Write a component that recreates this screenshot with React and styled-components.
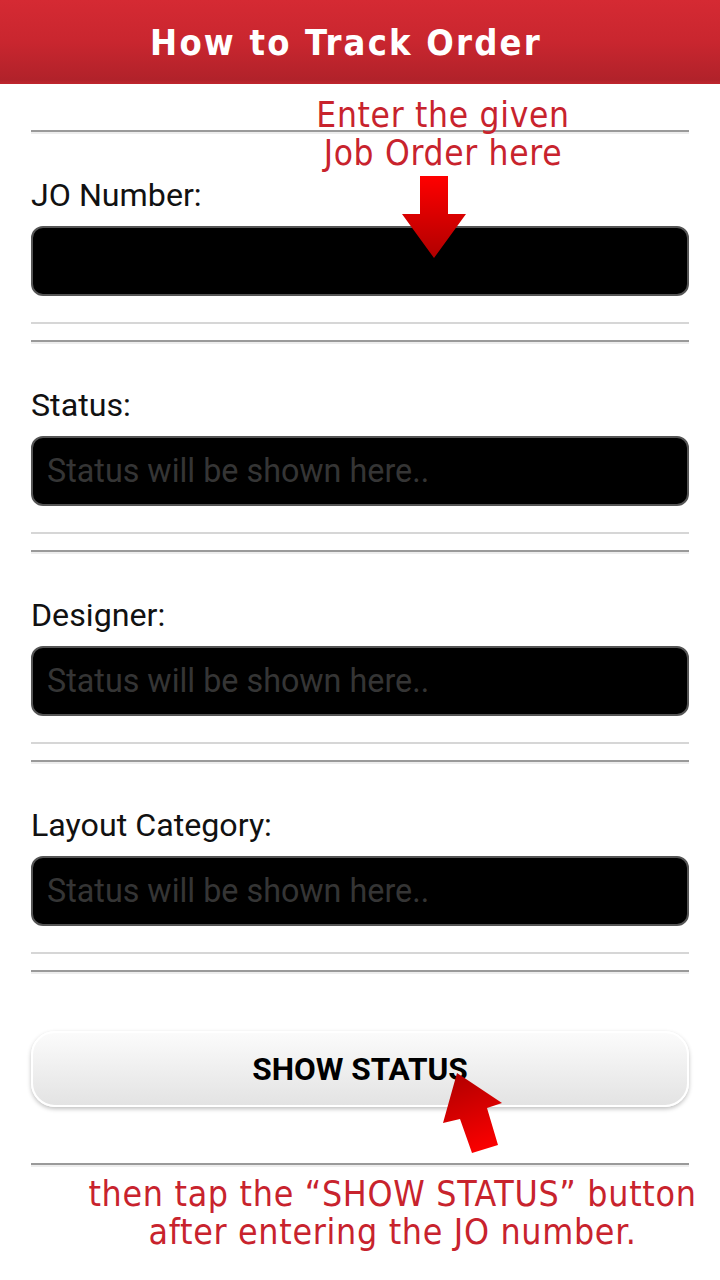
import React from "react";
import styled, { createGlobalStyle } from "styled-components";

const Global = createGlobalStyle`
  html, body { margin: 0; padding: 0; background: #fff; }
  body { font-family: Roboto, "Liberation Sans", sans-serif; }
  * { box-sizing: border-box; }
`;

const Page = styled.div`
  width: 720px;
  min-height: 1280px;
  background: #fff;
  position: relative;
  overflow: hidden;
`;

const Header = styled.header`
  height: 84px;
  padding-right: 28px;
  background: linear-gradient(#d52a33 0%, #c9262f 50%, #b1222a 95%, #c0262e 100%);
  display: flex;
  align-items: center;
  justify-content: center;
`;

const Title = styled.h1`
  margin: 0;
  font-family: "DejaVu Sans Condensed", "DejaVu Sans", sans-serif;
  font-stretch: condensed;
  font-weight: bold;
  font-size: 36px;
  letter-spacing: 2.2px;
  color: #fff;
`;

const Content = styled.main`
  padding: 0 31px;
  display: flex;
  flex-direction: column;
  position: relative;
`;

const HeavyRule = styled.div`
  height: 4px;
  border-top: 2px solid #9a9a9a;
  border-bottom: 2px solid #ededed;
  margin-top: ${(p) => p.$top}px;
`;

const LightRule = styled.div`
  height: 2px;
  background: #d6d6d6;
  margin-top: 26px;
`;

const Label = styled.label`
  margin-top: 44px;
  font-size: 32.2px;
  line-height: 34px;
  color: #111;
  height: 34px;
`;

const Field = styled.div`
  margin-top: 14px;
  height: 70px;
  background: #000;
  border: 2px solid #555;
  border-radius: 12px;
  display: flex;
  align-items: center;
  padding: 0 14px;
  font-size: 32.3px;
  color: #353535;
  white-space: nowrap;
`;

const ButtonWrap = styled.div`
  margin-top: 57px;
`;

const ShowButton = styled.button`
  width: 100%;
  height: 76px;
  border: 2px solid #fff;
  border-radius: 24px;
  background: linear-gradient(#fbfbfb, #e3e3e3);
  box-shadow: 0 2px 4px rgba(0, 0, 0, 0.25);
  font-family: Roboto, "Liberation Sans", sans-serif;
  font-weight: bold;
  font-size: 31.6px;
  padding-top: 2px;
  color: #000;
  display: flex;
  align-items: center;
  justify-content: center;
`;

const Caption = styled.p`
  margin: 8px 0 0 40px;
  width: 643px;
  text-align: center;
  white-space: nowrap;
  font-family: "DejaVu Sans Condensed", "DejaVu Sans", sans-serif;
  font-stretch: condensed;
  font-size: 35.4px;
  line-height: 38px;
  letter-spacing: 0.7px;
  color: #c8232d;
`;

const Note = styled.div`
  position: absolute;
  left: 263px;
  top: 96px;
  width: 360px;
  text-align: center;
  font-family: "DejaVu Sans Condensed", "DejaVu Sans", sans-serif;
  font-stretch: condensed;
  font-size: 35px;
  line-height: 38px;
  letter-spacing: 0.7px;
  color: #c8232d;
  white-space: nowrap;
`;

const ArrowLayer = styled.svg`
  position: absolute;
  left: 0;
  top: 0;
  pointer-events: none;
`;

const sections = [
  { label: "JO Number:", placeholder: "" },
  { label: "Status:", placeholder: "Status will be shown here.." },
  { label: "Designer:", placeholder: "Status will be shown here.." },
  { label: "Layout Category:", placeholder: "Status will be shown here.." },
];

export default function App() {
  return (
    <Page>
      <Global />
      <Header>
        <Title>How to Track Order</Title>
      </Header>
      <Content>
        {sections.map((s, i) => (
          <React.Fragment key={s.label}>
            <HeavyRule $top={i === 0 ? 46 : 16} />
            <Label>{s.label}</Label>
            <Field>{s.placeholder}</Field>
            <LightRule />
          </React.Fragment>
        ))}
        <HeavyRule $top={16} />
        <ButtonWrap>
          <ShowButton>SHOW STATUS</ShowButton>
        </ButtonWrap>
        <HeavyRule $top={56} />
        <Caption>
          then tap the “SHOW STATUS” button
          <br />
          after entering the JO number.
        </Caption>
      </Content>
      <Note>
        Enter the given
        <br />
        Job Order here
      </Note>
      <ArrowLayer width="720" height="1280" viewBox="0 0 720 1280">
        <defs>
          <linearGradient id="downGrad" x1="0" y1="0" x2="0" y2="1">
            <stop offset="0" stopColor="#ff0000" />
            <stop offset="1" stopColor="#b00000" />
          </linearGradient>
          <linearGradient id="upGrad" gradientUnits="userSpaceOnUse" x1="490" y1="1152" x2="460" y2="1075">
            <stop offset="0" stopColor="#ff0000" />
            <stop offset="1" stopColor="#b40000" />
          </linearGradient>
        </defs>
        <polygon
          points="420,176 448,176 448,214 466,214 434,258 402,214 420,214"
          fill="url(#downGrad)"
        />
        <polygon
          points="457,1073 502,1103 487,1108 498,1145 472,1153 460,1119 443,1123"
          fill="url(#upGrad)"
        />
      </ArrowLayer>
    </Page>
  );
}
